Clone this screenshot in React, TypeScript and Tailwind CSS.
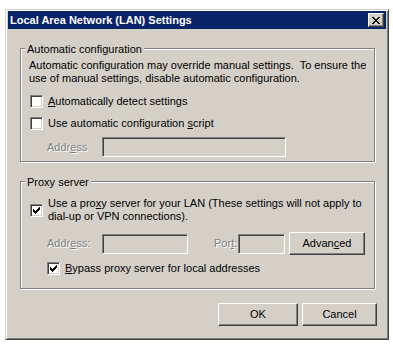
import type { ReactNode } from 'react';

function Check({ checked = false }: { checked?: boolean }) {
  return (
    <span className="flex h-[13px] w-[13px] shrink-0 items-center justify-center border border-t-[#808080] border-l-[#808080] border-b-white border-r-white bg-white shadow-[inset_1px_1px_0_#404040,inset_-1px_-1px_0_#d4d0c8]">
      {checked && (
        <svg width="7" height="7" viewBox="0 0 7 7" shapeRendering="crispEdges">
          <path
            d="M0 2h1v3H0z M1 3h1v3H1z M2 4h1v3H2z M3 3h1v3H3z M4 2h1v3H4z M5 1h1v3H5z M6 0h1v3H6z"
            fill="#000"
          />
        </svg>
      )}
    </span>
  );
}

function Field({ w }: { w: string }) {
  return (
    <span
      className={`block h-[20px] shrink-0 ${w} border border-t-[#808080] border-l-[#808080] border-b-white border-r-white bg-[#d4d0c8] shadow-[inset_1px_1px_0_#404040,inset_-1px_-1px_0_#d4d0c8]`}
    />
  );
}

function Btn({ children, w }: { children: ReactNode; w: string }) {
  return (
    <button
      type="button"
      className={`flex h-[23px] shrink-0 ${w} items-center justify-center border border-t-white border-l-white border-b-[#404040] border-r-[#404040] bg-[#d4d0c8] shadow-[inset_-1px_-1px_0_#808080] text-[11px] leading-[13px] text-black`}
    >
      {children}
    </button>
  );
}

function Group({ label, h, children }: { label: string; h: string; children: ReactNode }) {
  return (
    <div
      className={`relative ml-[12px] w-[355px] ${h} border border-[#808080] shadow-[inset_1px_1px_0_#fff,1px_1px_0_#fff]`}
    >
      <span className="absolute left-[4px] -top-[6px] bg-[#d4d0c8] px-[2px] leading-[13px]">{label}</span>
      {children}
    </div>
  );
}

const dim = 'text-[#808080] [text-shadow:1px_1px_0_#fff] whitespace-nowrap';

export default function App() {
  return (
    <div className="h-[346px] w-[393px] bg-white pl-[5px] pt-[9px] font-['Liberation_Sans',Arial,sans-serif] text-[11px] leading-[13px] text-black">
      <div className="flex h-[331px] w-[384px] flex-col border border-t-[#d4d0c8] border-l-[#d4d0c8] border-b-[#404040] border-r-[#404040] bg-[#d4d0c8] px-[2px] pt-[1px] shadow-[inset_1px_1px_0_#fff,inset_-1px_-1px_0_#808080]">
        <div className="flex h-[18px] items-center justify-between bg-[#0a246a] pl-[2px] pr-[2px]">
          <span className="text-[11px] font-bold text-white">Local Area Network (LAN) Settings</span>
          <span className="flex h-[14px] w-[16px] items-center justify-center border border-t-white border-l-white border-b-[#404040] border-r-[#404040] bg-[#d4d0c8] shadow-[inset_-1px_-1px_0_#808080]">
            <svg width="8" height="7" viewBox="0 0 8 7" shapeRendering="crispEdges">
              <path
                d="M0 0h2v1H0z M6 0h2v1H6z M1 1h2v1H1z M5 1h2v1H5z M2 2h4v1H2z M3 3h2v1H3z M2 4h4v1H2z M1 5h2v1H1z M5 5h2v1H5z M0 6h2v1H0z M6 6h2v1H6z"
                fill="#000"
              />
            </svg>
          </span>
        </div>

        <div className="mt-[19px]">
          <Group label="Automatic configuration" h="h-[114px]">
            <div className="flex flex-col pl-[8px] pt-[10px]">
              <p className="whitespace-pre">
                {'Automatic configuration may override manual settings.  To ensure the'}
                <br />
                {'use of manual settings, disable automatic configuration.'}
              </p>
              <label className="mt-[10px] ml-[1px] flex h-[13px] items-center gap-[5px]">
                <Check />
                <span>
                  <u>A</u>utomatically detect settings
                </span>
              </label>
              <label className="mt-[9px] ml-[1px] flex h-[13px] items-center gap-[5px]">
                <Check />
                <span>
                  Use automatic configuration <u>s</u>cript
                </span>
              </label>
              <div className="mt-[7px] ml-[18px] flex items-center">
                <span className={`w-[55px] ${dim}`}>
                  Addr<u>e</u>ss
                </span>
                <Field w="w-[184px]" />
              </div>
            </div>
          </Group>
        </div>

        <div className="mt-[19px]">
          <Group label="Proxy server" h="h-[108px]">
            <div className="flex flex-col pl-[9px] pt-[15px]">
              <label className="flex items-center gap-[5px]">
                <Check checked />
                <span className="whitespace-pre">
                  {'Use a pro'}
                  <u>x</u>
                  {'y server for your LAN (These settings will not apply to'}
                  <br />
                  {'dial-up or VPN connections).'}
                </span>
              </label>
              <div className="mt-[9px] ml-[17px] flex h-[23px] items-center">
                <span className={`w-[55px] ${dim}`}>
                  Addr<u>e</u>ss:
                </span>
                <Field w="w-[86px]" />
                <span className={`ml-[26px] w-[24px] shrink-0 ${dim}`}>
                  Por<u>t</u>:
                </span>
                <Field w="w-[47px]" />
                <span className="ml-[4px]">
                  <Btn w="w-[76px]">
                    <span>
                      Advan<u>c</u>ed
                    </span>
                  </Btn>
                </span>
              </div>
              <label className="mt-[7px] ml-[17px] flex h-[13px] items-center gap-[5px]">
                <Check checked />
                <span>
                  <u>B</u>ypass proxy server for local addresses
                </span>
              </label>
            </div>
          </Group>
        </div>

        <div className="mt-[14px] mr-[9px] flex justify-end gap-[4px]">
          <Btn w="w-[80px]">OK</Btn>
          <Btn w="w-[75px]">Cancel</Btn>
        </div>
      </div>
    </div>
  );
}
